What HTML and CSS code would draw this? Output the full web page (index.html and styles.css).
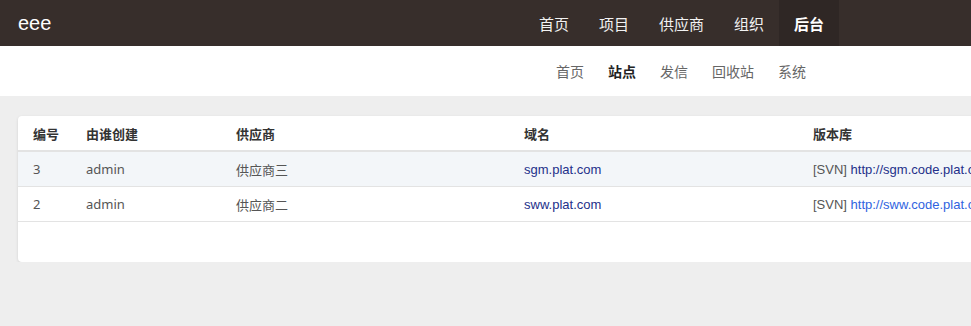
FILE: index.html
```html
<!DOCTYPE html>
<html lang="zh">
<head>
  <meta charset="UTF-8">
  <title>站点</title>
  <link rel="stylesheet" href="styles.css">
</head>
<body>
  <div class="topbar">
    <div class="brand">eee</div>
    <ul class="main-nav">
      <li>首页</li>
      <li>项目</li>
      <li>供应商</li>
      <li>组织</li>
      <li class="active">后台</li>
    </ul>
  </div>
  <div class="subbar">
    <ul class="sub-nav">
      <li>首页</li>
      <li class="active">站点</li>
      <li>发信</li>
      <li>回收站</li>
      <li>系统</li>
    </ul>
  </div>
  <div class="content">
    <div class="card">
      <table class="sites">
        <thead>
          <tr>
            <th class="c-id">编号</th>
            <th class="c-user">由谁创建</th>
            <th class="c-vendor">供应商</th>
            <th class="c-domain">域名</th>
            <th class="c-repo">版本库</th>
          </tr>
        </thead>
        <tbody>
          <tr class="hover">
            <td>3</td>
            <td>admin</td>
            <td>供应商三</td>
            <td><a class="link visited" href="#">sgm.plat.com</a></td>
            <td class="repo">[SVN] <a class="link visited" href="#">http://sgm.code.plat.com</a></td>
          </tr>
          <tr>
            <td>2</td>
            <td>admin</td>
            <td>供应商二</td>
            <td><a class="link visited" href="#">sww.plat.com</a></td>
            <td class="repo">[SVN] <a class="link" href="#">http://sww.code.plat.com</a></td>
          </tr>
        </tbody>
      </table>
    </div>
  </div>
</body>
</html>
```

FILE: styles.css
```css
body {
  margin: 0;
  background: #eeeeee;
  font-family: "Noto Sans", "Noto Sans CJK SC", sans-serif;
  overflow: hidden;
}
ul {
  list-style: none;
  margin: 0;
  padding: 0;
}
.topbar {
  height: 46px;
  background: #372e2b;
  display: flex;
  align-items: center;
  justify-content: space-between;
  padding-left: 18px;
  padding-right: 132px;
}
.brand {
  color: #ffffff;
  font-family: "Liberation Sans", sans-serif;
  font-size: 20px;
}
.main-nav {
  display: flex;
  height: 46px;
}
.main-nav li {
  display: flex;
  align-items: center;
  padding: 0 15px;
  color: #f2f2f2;
  font-family: "Noto Sans CJK SC", sans-serif;
  font-size: 15px;
}
.main-nav li.active {
  background: #2f2725;
  color: #ffffff;
  font-weight: bold;
}
.subbar {
  height: 50px;
  background: #ffffff;
  display: flex;
  justify-content: flex-end;
  padding-right: 153px;
}
.sub-nav {
  display: flex;
  align-items: center;
}
.sub-nav li {
  padding: 0 12px;
  color: #666666;
  font-family: "Noto Sans CJK SC", sans-serif;
  font-size: 14px;
}
.sub-nav li.active {
  color: #222222;
  font-weight: bold;
}
.content {
  padding: 20px 0 0 18px;
}
.card {
  width: 1100px;
  height: 146px;
  background: #ffffff;
  border-radius: 4px;
  box-shadow: 0 1px 3px rgba(0, 0, 0, 0.12);
}
.sites {
  border-collapse: collapse;
  width: 100%;
  font-size: 13px;
  color: #555555;
}
.sites th {
  text-align: left;
  font-family: "Noto Sans CJK SC", sans-serif;
  font-weight: bold;
  color: #333333;
  height: 34px;
  padding: 0 0 0 15px;
  border-bottom: 2px solid #e3e3e3;
}
.sites td {
  height: 34px;
  padding: 0 0 0 15px;
  border-bottom: 1px solid #e3e3e3;
}
.sites td.repo {
  font-family: "Liberation Sans", sans-serif;
}
.sites tr.hover td {
  background: #f3f6f9;
}
.c-id { width: 38px; }
.c-user { width: 135px; }
.c-vendor { width: 273px; }
.c-domain { width: 274px; }
.link {
  font-family: "Liberation Sans", sans-serif;
  color: #2f63e0;
  text-decoration: none;
}
.link.visited {
  color: #23308a;
}
```
